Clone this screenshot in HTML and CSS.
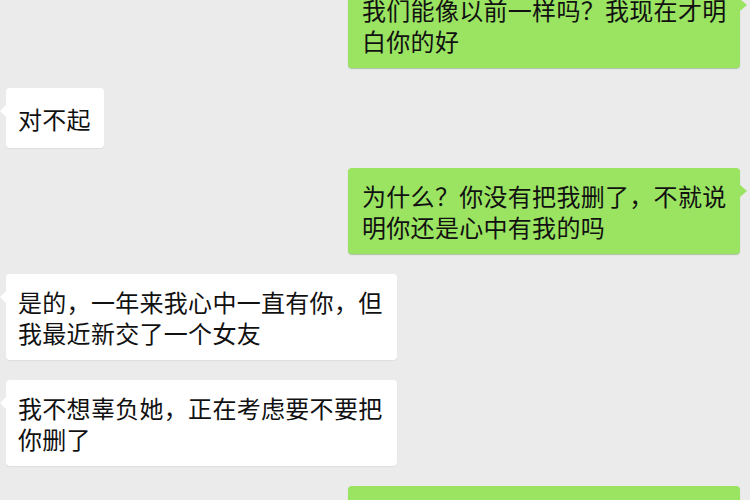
FILE: index.html
```html
<!DOCTYPE html>
<html lang="zh-CN">
<head>
  <meta charset="UTF-8">
  <meta name="viewport" content="width=device-width, initial-scale=1.0">
  <title>聊天记录</title>
  <link rel="stylesheet" href="styles.css">
</head>
<body>
  <div class="chat">
    <div class="msg me">我们能像以前一样吗？我现在才明白你的好</div>
    <div class="msg other single">对不起</div>
    <div class="msg me">为什么？你没有把我删了，不就说明你还是心中有我的吗</div>
    <div class="msg other">是的，一年来我心中一直有你，但我最近新交了一个女友</div>
    <div class="msg other">我不想辜负她，正在考虑要不要把你删了</div>
    <div class="msg me cut"></div>
  </div>
</body>
</html>
```

FILE: styles.css
```css
body {
  margin: 0;
  background-color: #ebebeb;
  font-family: "Noto Sans CJK SC", "Noto Sans", sans-serif;
  color: #111111;
  width: 750px;
  height: 500px;
  overflow: hidden;
}
.chat {
  display: flex;
  flex-direction: column;
  gap: 20px;
  margin-top: -18px;
}
.msg {
  position: relative;
  box-sizing: border-box;
  max-width: 392px;
  padding: 12px 13px 12px 14px;
  font-size: 24px;
  line-height: 31px;
  letter-spacing: 0.3px;
  border-radius: 4px;
}
.msg.single {
  padding-top: 15px;
  padding-bottom: 14px;
}
/* last bubble only peeks in at the bottom edge */
.msg.cut {
  width: 392px;
  height: 86px;
}
.me {
  align-self: flex-end;
  margin-right: 10px;
  background-color: #9ae462;
  box-shadow: 0 1px 1px rgba(60, 120, 30, 0.35);
}
.me::after {
  content: "";
  position: absolute;
  right: -7px;
  top: 17px;
  border: 6px solid transparent;
  border-right: 0;
  border-left: 7px solid #9ae462;
}
.other {
  align-self: flex-start;
  margin-left: 6px;
  max-width: 391px;
  padding-left: 12px;
  background-color: #ffffff;
  box-shadow: 0 1px 1px rgba(0, 0, 0, 0.06);
}
.other::after {
  content: "";
  position: absolute;
  left: -6px;
  top: 17px;
  border: 6px solid transparent;
  border-left: 0;
  border-right: 6px solid #ffffff;
}
```
